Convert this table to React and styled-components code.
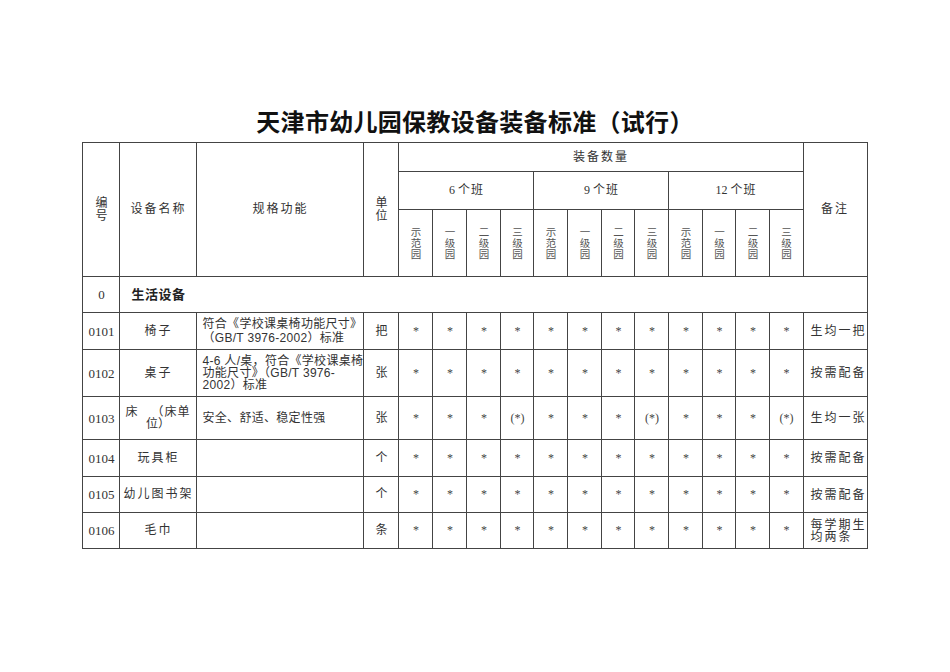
import React from "react";
import styled, { createGlobalStyle, css } from "styled-components";

/* ===== 전역 ===== */

const GlobalStyle = createGlobalStyle`
  html, body {
    margin: 0;
    padding: 0;
    background: #ffffff;
  }
  body {
    font-family: "Liberation Serif", "Noto Sans CJK SC", serif;
    color: #222222;
  }
`;

const Page = styled.main`
  width: 950px;
  min-height: 672px;
  padding-top: 111px;
  box-sizing: border-box;
  display: flex;
  flex-direction: column;
  align-items: center;
`;

const Title = styled.h1`
  margin: 0 0 7px;
  font-family: "Liberation Serif", "Noto Sans CJK SC", serif;
  font-size: 24px;
  line-height: 24px;
  font-weight: 700;
  color: #111111;
  letter-spacing: 0.3px;
`;

/* ===== 표 ===== */

const Sheet = styled.table`
  width: 784px;
  table-layout: fixed;
  border-collapse: collapse;
  font-size: 12px;
  color: #333333;
`;

const Col = styled.col`
  width: ${(p) => p.$w}px;
`;

const Row = styled.tr`
  height: ${(p) => p.$h}px;
`;

const cellBase = css`
  border: 1px solid #444444;
  padding: 0;
  vertical-align: middle;
  text-align: center;
  font-weight: 400;
  line-height: 13px;
  box-sizing: border-box;
`;

const HeadCell = styled.th`
  ${cellBase};
  letter-spacing: ${(p) => (p.$spaced ? "2px" : "0")};
`;

const GroupText = styled.span`
  letter-spacing: 1px;
`;

/* 세로쓰기: 한 글자씩 위에서 아래로 */
const Stack = styled.span`
  display: inline-flex;
  flex-direction: column;
  align-items: center;
  font-size: ${(p) => (p.$small ? "10.5px" : "12px")};
  line-height: ${(p) => (p.$small ? "11px" : "13px")};
  color: ${(p) => (p.$small ? "#555555" : "#333333")};
`;

const CodeCell = styled.td`
  ${cellBase};
  font-size: 13px;
`;

const SectionCell = styled.td`
  ${cellBase};
  text-align: left;
  padding-left: 11px;
  font-size: 13px;
  font-weight: 700;
  letter-spacing: 0.5px;
  color: #222222;
`;

const NameCell = styled.td`
  ${cellBase};
  letter-spacing: 2px;
`;

const BedName = styled.div`
  display: flex;
  flex-direction: column;
  padding: 0 6px 0 5px;
  line-height: 12px;
`;

const BedLine = styled.div`
  display: flex;
  align-items: flex-start;
  justify-content: ${(p) => (p.$center ? "center" : "space-between")};
  letter-spacing: ${(p) => (p.$center ? "0" : "1px")};
`;

const SpecCell = styled.td`
  ${cellBase};
  text-align: left;
  padding-left: 5px;
  font-family: "Liberation Sans", "Noto Sans CJK SC", sans-serif;
  letter-spacing: 0.3px;
  line-height: ${(p) => (p.$tight ? "12px" : "14px")};
`;

const UnitCell = styled.td`
  ${cellBase};
`;

const MarkCell = styled.td`
  ${cellBase};
  font-size: 12px;
  color: #444444;
`;

const NoteCell = styled.td`
  ${cellBase};
  text-align: left;
  padding-left: 7px;
  letter-spacing: 2px;
  line-height: 12px;
`;

/* ===== 데이터 ===== */

const LEVELS = ["示范园", "一级园", "二级园", "三级园"];
const GROUPS = ["6", "9", "12"];

const allStars = Array(12).fill("*");
const bedStars = allStars.map((m, i) => (i % 4 === 3 ? "(*)" : m));

const ROWS = [
  {
    code: "0101",
    name: "椅子",
    spec: ["符合《学校课桌椅功能尺寸》", "（GB/T 3976-2002）标准"],
    unit: "把",
    marks: allStars,
    note: ["生均一把"],
    h: 37,
  },
  {
    code: "0102",
    name: "桌子",
    spec: ["4-6 人/桌，符合《学校课桌椅", "功能尺寸》（GB/T 3976-", "2002）标准"],
    tight: true,
    unit: "张",
    marks: allStars,
    note: ["按需配备"],
    h: 47,
  },
  {
    code: "0103",
    bed: true,
    spec: ["安全、舒适、稳定性强"],
    unit: "张",
    marks: bedStars,
    note: ["生均一张"],
    h: 43,
  },
  { code: "0104", name: "玩具柜", spec: [], unit: "个", marks: allStars, note: ["按需配备"], h: 37 },
  { code: "0105", name: "幼儿图书架", spec: [], unit: "个", marks: allStars, note: ["按需配备"], h: 36 },
  { code: "0106", name: "毛巾", spec: [], unit: "条", marks: allStars, note: ["每学期生", "均两条"], h: 36 },
];

const SUB_WIDTHS = [34, 34, 34, 33, 34, 34, 33, 34, 34, 33, 34, 33];

const withBreaks = (lines) =>
  lines.map((l, i) => (
    <React.Fragment key={i}>
      {i > 0 && <br />}
      {l}
    </React.Fragment>
  ));

const VerticalText = ({ text, small }) => (
  <Stack $small={small}>
    {text.split("").map((ch, i) => (
      <span key={i}>{ch}</span>
    ))}
  </Stack>
);

/* ===== Component ===== */

export default function App() {
  return (
    <>
      <GlobalStyle />
      <Page>
        <Title>天津市幼儿园保教设备装备标准（试行）</Title>

        <Sheet>
          <colgroup>
            <Col $w={37} />
            <Col $w={77} />
            <Col $w={167} />
            <Col $w={35} />
            {SUB_WIDTHS.map((w, i) => (
              <Col key={i} $w={w} />
            ))}
            <Col $w={64} />
          </colgroup>

          <thead>
            <Row $h={29}>
              <HeadCell rowSpan={3}>
                <VerticalText text="编号" />
              </HeadCell>
              <HeadCell rowSpan={3} $spaced>
                设备名称
              </HeadCell>
              <HeadCell rowSpan={3} $spaced>
                规格功能
              </HeadCell>
              <HeadCell rowSpan={3}>
                <VerticalText text="单位" />
              </HeadCell>
              <HeadCell colSpan={12} $spaced>
                装备数量
              </HeadCell>
              <HeadCell rowSpan={3} $spaced>
                备注
              </HeadCell>
            </Row>
            <Row $h={38}>
              {GROUPS.map((g) => (
                <HeadCell key={g} colSpan={4}>
                  {g} <GroupText>个班</GroupText>
                </HeadCell>
              ))}
            </Row>
            <Row $h={67}>
              {GROUPS.map((g) =>
                LEVELS.map((lv) => (
                  <HeadCell key={g + lv}>
                    <VerticalText text={lv} small />
                  </HeadCell>
                ))
              )}
            </Row>
          </thead>

          <tbody>
            <Row $h={36}>
              <CodeCell>0</CodeCell>
              <SectionCell colSpan={17}>生活设备</SectionCell>
            </Row>

            {ROWS.map((r) => (
              <Row key={r.code} $h={r.h}>
                <CodeCell>{r.code}</CodeCell>
                <NameCell>
                  {r.bed ? (
                    <BedName>
                      <BedLine>
                        <span>床</span>
                        <span>（床单</span>
                      </BedLine>
                      <BedLine $center>位）</BedLine>
                    </BedName>
                  ) : (
                    r.name
                  )}
                </NameCell>
                <SpecCell $tight={r.tight}>{withBreaks(r.spec)}</SpecCell>
                <UnitCell>{r.unit}</UnitCell>
                {r.marks.map((m, i) => (
                  <MarkCell key={i}>{m}</MarkCell>
                ))}
                <NoteCell>{withBreaks(r.note)}</NoteCell>
              </Row>
            ))}
          </tbody>
        </Sheet>
      </Page>
    </>
  );
}
